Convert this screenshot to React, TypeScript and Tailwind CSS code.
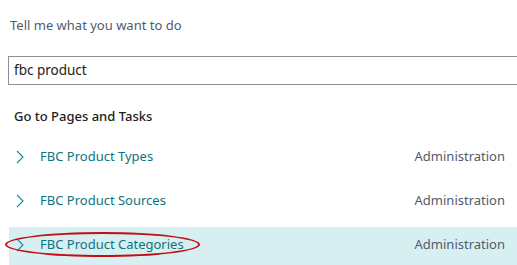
const rows = [
  { title: 'FBC Product Types', area: 'Administration' },
  { title: 'FBC Product Sources', area: 'Administration' },
  { title: 'FBC Product Categories', area: 'Administration', selected: true },
];

function Chevron() {
  return (
    <svg width="8" height="14" viewBox="0 0 8 14" fill="none" className="shrink-0">
      <polyline points="1,1 7,7 1,13" stroke="#1b8a93" strokeWidth="1.1" />
    </svg>
  );
}

export default function App() {
  return (
    <div
      className="relative h-[265px] w-[517px] overflow-hidden bg-white"
      style={{ fontFamily: '"Noto Sans", "Open Sans", sans-serif' }}
    >
      <p className="pl-[10px] pt-[16px] text-[13px] leading-[18px] text-[#505c6d]">Tell me what you want to do</p>

      <div className="ml-[8px] mt-[22px] flex h-[29px] items-center border border-r-0 border-[#8a8f9c] pl-[5px] text-[13.5px] text-[#212121]">
        fbc product
      </div>

      <h2 className="pl-[14px] pt-[21px] text-[13px] font-medium leading-[20px] text-[#212121]">Go to Pages and Tasks</h2>

      <div className="mt-[13px] pl-[9px]">
        {rows.map((row) => (
          <div
            key={row.title}
            className={`mb-[6px] flex h-[38px] items-center pb-[2px] pl-[7px] pr-[12px] ${row.selected ? 'bg-[#d8eff2]' : ''}`}
          >
            <Chevron />
            <span className="ml-[16px] text-[13px] text-[#0e737b]">{row.title}</span>
            <span className="ml-auto text-[13px] text-[#505c6d]">{row.area}</span>
          </div>
        ))}
      </div>

      <div className="absolute left-[5px] top-[232px] h-[25px] w-[195px] rounded-[50%] border-2 border-[#c10e12]" />
    </div>
  );
}
